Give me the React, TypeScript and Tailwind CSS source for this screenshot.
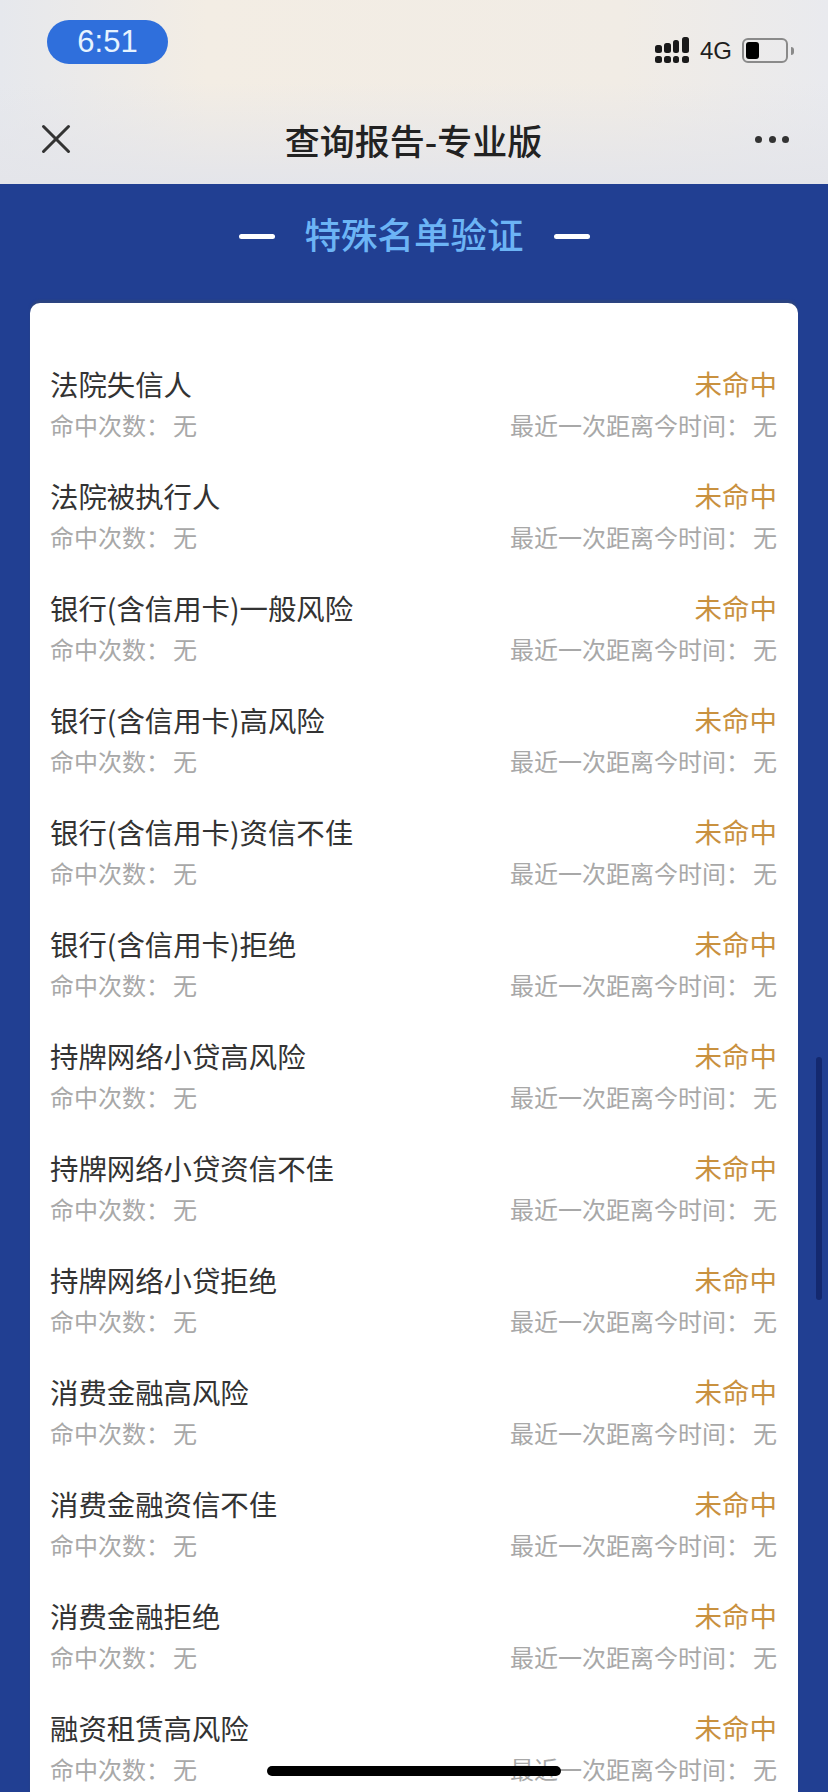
import { X } from 'lucide-react';

const rows = [
  '法院失信人',
  '法院被执行人',
  '银行(含信用卡)一般风险',
  '银行(含信用卡)高风险',
  '银行(含信用卡)资信不佳',
  '银行(含信用卡)拒绝',
  '持牌网络小贷高风险',
  '持牌网络小贷资信不佳',
  '持牌网络小贷拒绝',
  '消费金融高风险',
  '消费金融资信不佳',
  '消费金融拒绝',
  '融资租赁高风险',
];

function SignalIcon() {
  return (
    <svg width="34" height="27" viewBox="0 0 34 27" fill="#1a1a1a">
      <rect x="0" y="8" width="7" height="8" rx="2.5" />
      <rect x="9" y="6" width="7" height="10" rx="2.5" />
      <rect x="18" y="3" width="6" height="13" rx="2.5" />
      <rect x="27" y="0" width="7" height="16" rx="2.5" />
      <rect x="0" y="19" width="7" height="7" rx="2.5" />
      <rect x="9" y="19" width="7" height="7" rx="2.5" />
      <rect x="18" y="19" width="6" height="7" rx="2.5" />
      <rect x="27" y="19" width="7" height="7" rx="2.5" />
    </svg>
  );
}

function Row({ title }: { title: string }) {
  return (
    <div className="mb-[33px]">
      <div className="flex h-[40px] items-center justify-between">
        <span className="text-[28.4px] text-[#333333]">{title}</span>
        <span className="text-[27.5px] text-[#c9913f]">未命中</span>
      </div>
      <div className="mt-[2px] flex h-[37px] items-center justify-between text-[24px] text-[#a8a8a8]">
        <span>命中次数：<span className="ml-[3px]">无</span></span>
        <span>最近一次距离今时间：<span className="ml-[3px]">无</span></span>
      </div>
    </div>
  );
}

export default function App() {
  return (
    <div
      className="relative h-[1792px] w-[828px] overflow-hidden bg-[#213f92]"
      style={{ fontFamily: '"Noto Sans CJK SC", "Noto Sans", sans-serif' }}
    >
      {/* Status bar + nav */}
      <header className="h-[184px] bg-[linear-gradient(180deg,rgba(229,230,235,0)_45%,#e4e5ea_100%),linear-gradient(90deg,#e6e8ed_0%,#f3ede4_25%,#f1ece5_75%,#e9eaee_100%)]">
        <div className="flex h-[100px] items-start justify-between pl-[47px] pr-[34px] pt-[20px]">
          <div className="flex h-[44px] w-[121px] items-center justify-center rounded-full bg-[#2f6fdc] font-['Liberation_Sans'] text-[31px] text-[#e6f3ff]">
            6:51
          </div>
          <div className="mt-[17px] flex items-center">
            <SignalIcon />
            <span className="ml-[11px] w-[32px] font-['Liberation_Sans'] text-[24px] leading-none text-[#1f1f1f]">4G</span>
            <div className="ml-[10px] flex h-[25px] w-[46px] items-center rounded-[6px] border-[2px] border-[#8a8a8a] px-[2px]">
              <div className="h-[17px] w-[13px] rounded-[3px] bg-black" />
            </div>
            <div className="ml-[3px] h-[8px] w-[3px] rounded-r-full bg-[#8a8a8a]" />
          </div>
        </div>
        <div className="flex h-[80px] items-center justify-between pb-[2px] pl-[31px] pr-[39px]">
          <X size={50} strokeWidth={1.45} className="text-[#333333]" />
          <h1 className="ml-[-9px] text-[35px] font-medium leading-none text-[#222222]">查询报告-专业版</h1>
          <div className="flex w-[34px] justify-between">
            <span className="h-[7px] w-[7px] rounded-full bg-[#333333]" />
            <span className="h-[7px] w-[7px] rounded-full bg-[#333333]" />
            <span className="h-[7px] w-[7px] rounded-full bg-[#333333]" />
          </div>
        </div>
      </header>

      {/* Section title */}
      <div className="flex h-[119px] items-center justify-center pb-[15px]">
        <span className="h-[5px] w-[36px] rounded-full bg-white" />
        <span className="mx-[30px] mb-[4px] text-[36.5px] font-medium leading-none text-[#6cb4f5]">特殊名单验证</span>
        <span className="h-[5px] w-[36px] rounded-full bg-white" />
      </div>

      {/* List card */}
      <div className="mx-[30px] rounded-[10px] bg-white pb-[40px] pl-[20px] pr-[21px] pt-[61px] shadow-[0_-3px_2px_#2c4480]">
        {rows.map((title) => (
          <Row key={title} title={title} />
        ))}
      </div>

      {/* Scroll indicator */}
      <div className="absolute left-[816px] top-[1057px] h-[243px] w-[6px] rounded-full bg-[#14296f]" />
      {/* Home indicator */}
      <div className="absolute left-[267px] top-[1766px] h-[10px] w-[294px] rounded-full bg-black" />
    </div>
  );
}
